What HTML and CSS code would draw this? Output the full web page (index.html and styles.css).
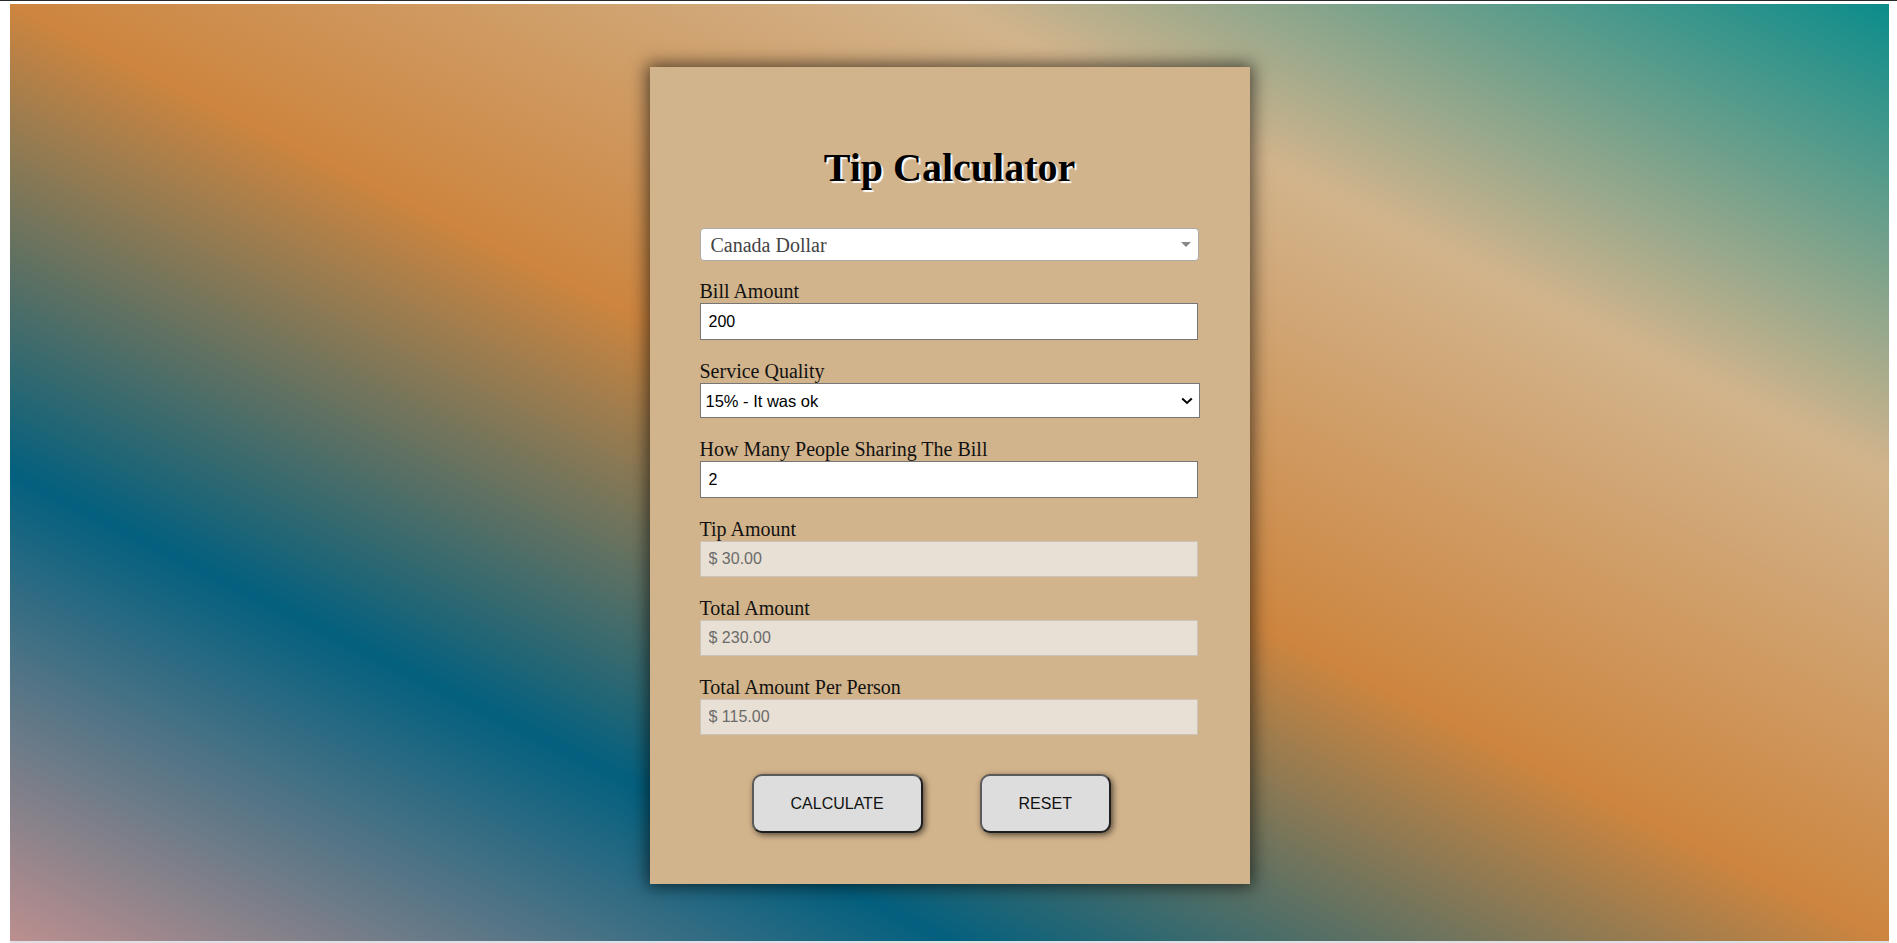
FILE: index.html
```html
<!DOCTYPE html>
<html lang="en">
<head>
<meta charset="utf-8">
<title>Tip Calculator</title>
<link rel="stylesheet" href="styles.css">
</head>
<body>
<div class="bg">
  <div class="card">
    <h1 class="title">Tip Calculator</h1>
    <div class="currency">
      <span class="currency-text">Canada Dollar</span>
      <span class="currency-arrow"></span>
    </div>
    <div class="field field-first">
      <label class="label">Bill Amount</label>
      <input class="input" type="text" value="200">
    </div>
    <div class="field">
      <label class="label">Service Quality</label>
      <div class="select-wrap">
        <select class="select"><option>15% - It was ok</option></select>
        <svg class="chevron" width="12" height="8" viewBox="0 0 12 8"><path d="M1.2 1.5 L6 6 L10.8 1.5" fill="none" stroke="#000" stroke-width="2"/></svg>
      </div>
    </div>
    <div class="field">
      <label class="label">How Many People Sharing The Bill</label>
      <input class="input" type="text" value="2">
    </div>
    <div class="field">
      <label class="label">Tip Amount</label>
      <input class="input input-readonly" type="text" value="$ 30.00" readonly>
    </div>
    <div class="field">
      <label class="label">Total Amount</label>
      <input class="input input-readonly" type="text" value="$ 230.00" readonly>
    </div>
    <div class="field">
      <label class="label">Total Amount Per Person</label>
      <input class="input input-readonly" type="text" value="$ 115.00" readonly>
    </div>
    <div class="actions">
      <button class="btn" type="button">Calculate</button>
      <button class="btn" type="button">Reset</button>
    </div>
  </div>
</div>
</body>
</html>
```

FILE: styles.css
```css
html {
  background: #fff;
}

body {
  margin: 0;
  height: 943px;
  box-sizing: border-box;
  border-top: 1px solid #2b2b2b;
  padding: 3px 8px 0 10px;
  overflow: hidden;
  font-family: "Liberation Serif", "Times New Roman", serif;
}

.bg {
  height: 939px;
  box-sizing: border-box;
  padding-top: 63px;
  border-bottom: 2px solid #dde1e5;
  background: linear-gradient(to top right, #bc8f8f 0%, #03607f 25%, #cd853f 50%, #d2b48c 75%, #0b8c8b 100%);
}

.card {
  width: 600px;
  box-sizing: border-box;
  margin: 0 auto;
  padding: 78px 50px 51px;
  background: #d2b48c;
  box-shadow: 0 0 16px 3px rgba(0, 0, 0, 0.6);
}

.title {
  margin: 0;
  font-size: 40px;
  line-height: 46px;
  font-weight: bold;
  text-align: center;
  color: #000;
  text-shadow: 2px 2px 1px #fff;
}

.currency {
  margin-top: 37px;
  width: 499px;
  height: 33px;
  box-sizing: border-box;
  display: flex;
  align-items: center;
  justify-content: space-between;
  padding: 0 7px 0 10px;
  background: #fff;
  border: 1px solid #aaa;
  border-radius: 4px;
}

.currency-text {
  font-size: 20px;
  color: #444;
  line-height: 24px;
}

.currency-arrow {
  width: 0;
  height: 0;
  border-top: 5px solid #888;
  border-left: 5px solid transparent;
  border-right: 5px solid transparent;
}

.field {
  margin-top: 20px;
}

.field-first {
  margin-top: 19px;
}

.label {
  display: block;
  font-size: 20px;
  line-height: 23px;
  color: #111;
}

.input {
  display: block;
  width: 498px;
  height: 37px;
  box-sizing: border-box;
  margin: 0;
  padding: 0 8px;
  border: 1px solid #767676;
  background: #fff;
  font-family: "Liberation Sans", Arial, sans-serif;
  font-size: 16px;
  color: #000;
  outline: none;
}

.input-readonly {
  height: 36px;
  background: #e8e0d4;
  border-color: #cbc3b8;
  color: #6b6b6b;
}

.select-wrap {
  position: relative;
  width: 500px;
}

.select {
  display: block;
  width: 500px;
  height: 35px;
  box-sizing: border-box;
  margin: 0;
  padding: 0 30px 0 5px;
  border: 1px solid #767676;
  border-radius: 0;
  background: #fff;
  -webkit-appearance: none;
  appearance: none;
  font-family: "Liberation Sans", Arial, sans-serif;
  font-size: 16.5px;
  color: #000;
}

.chevron {
  position: absolute;
  right: 7px;
  top: 14px;
}

.actions {
  display: flex;
  gap: 57px;
  padding-left: 52px;
  margin-top: 39px;
}

.btn {
  height: 59px;
  box-sizing: border-box;
  padding: 0 37px;
  margin: 0;
  background: #dddddd;
  border: 2px solid;
  border-color: #5a5a5a #1e1e1e #1e1e1e #5a5a5a;
  border-radius: 10px;
  box-shadow: 2px 2px 6px rgba(0, 0, 0, 0.6);
  font-family: "Liberation Sans", Arial, sans-serif;
  font-size: 16px;
  text-transform: uppercase;
  color: #111;
}
```
